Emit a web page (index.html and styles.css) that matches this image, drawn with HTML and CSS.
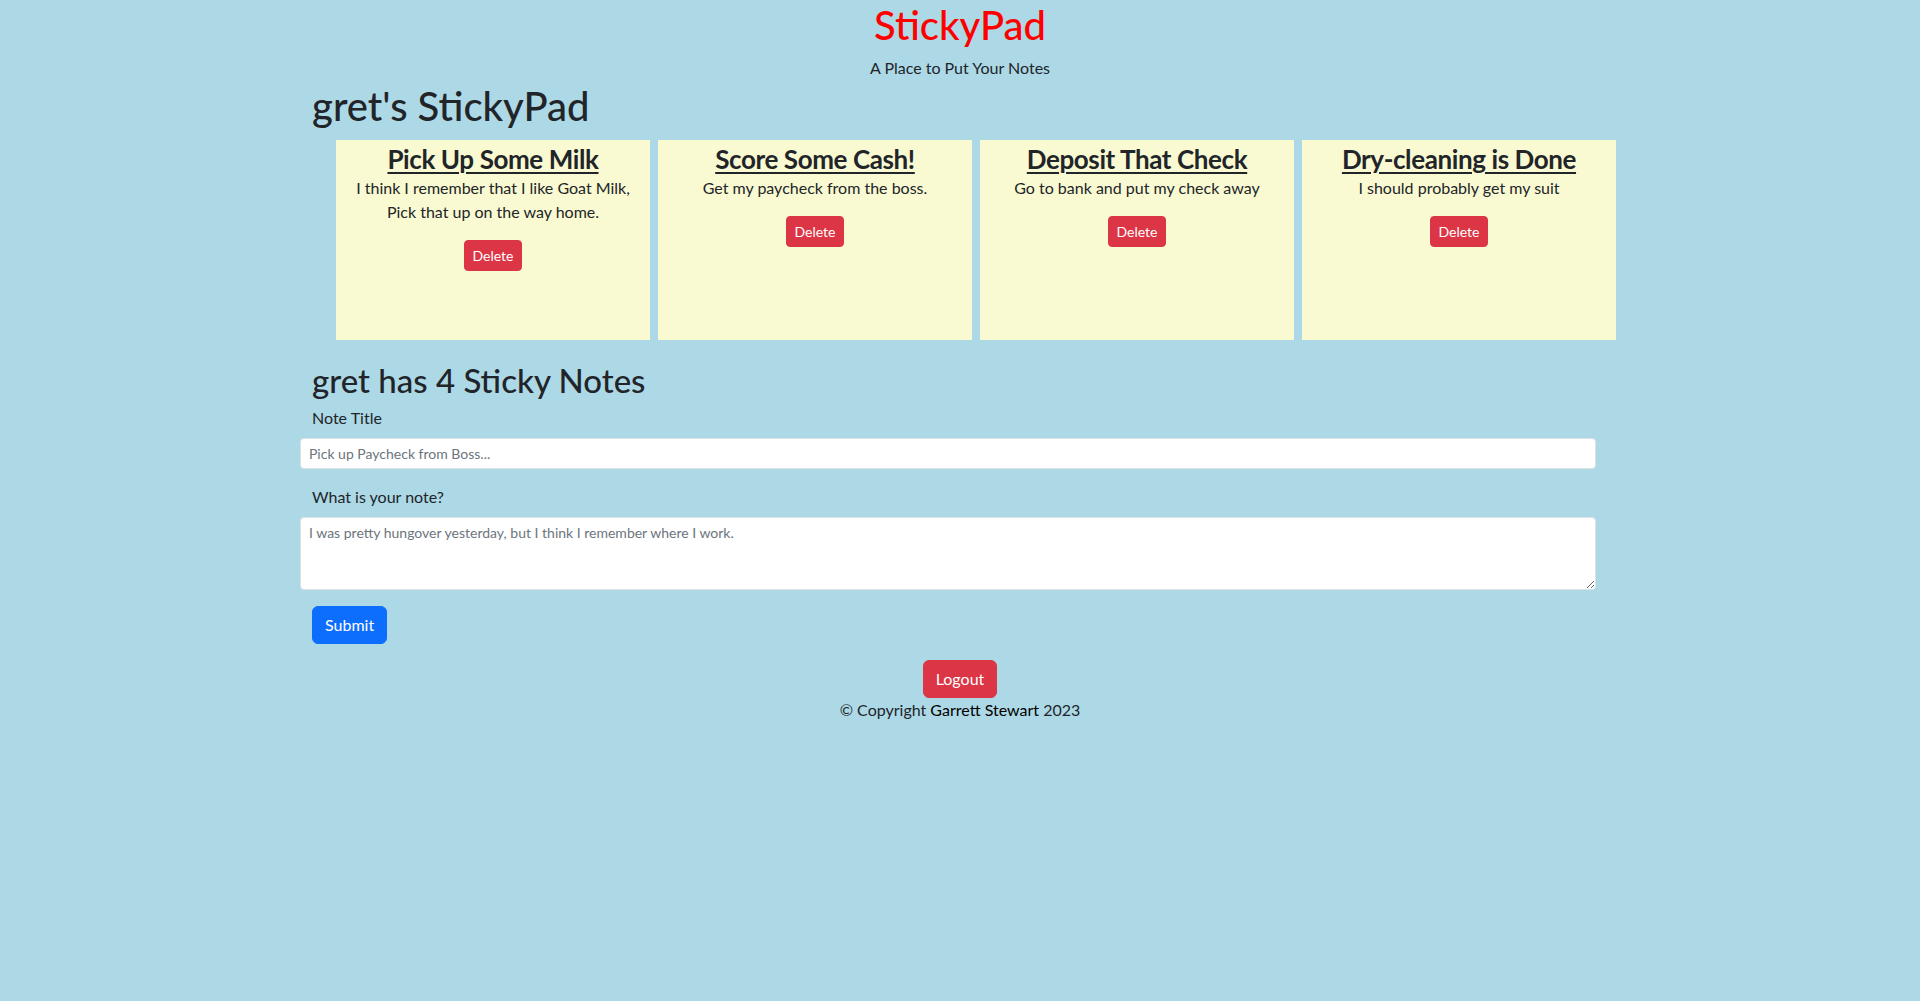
FILE: index.html
```html
<!DOCTYPE html>
<html lang="en">
<head>
<meta charset="utf-8">
<title>StickyPad</title>
<link rel="stylesheet" href="styles.css">
</head>
<body>
<header class="site-header">
  <h1 class="site-title">StickyPad</h1>
  <p class="site-tagline">A Place to Put Your Notes</p>
</header>
<main class="container">
  <h1 class="pad-title">gret's StickyPad</h1>
  <div class="notes">
    <div class="note">
      <h3 class="note-title">Pick Up Some Milk</h3>
      <p class="note-text">I think I remember that I like Goat Milk, Pick that up on the way home.</p>
      <button class="btn btn-sm btn-danger">Delete</button>
    </div>
    <div class="note">
      <h3 class="note-title">Score Some Cash!</h3>
      <p class="note-text">Get my paycheck from the boss.</p>
      <button class="btn btn-sm btn-danger">Delete</button>
    </div>
    <div class="note">
      <h3 class="note-title">Deposit That Check</h3>
      <p class="note-text">Go to bank and put my check away</p>
      <button class="btn btn-sm btn-danger">Delete</button>
    </div>
    <div class="note">
      <h3 class="note-title">Dry-cleaning is Done</h3>
      <p class="note-text">I should probably get my suit</p>
      <button class="btn btn-sm btn-danger">Delete</button>
    </div>
  </div>
  <h2 class="count-title">gret has 4 Sticky Notes</h2>
  <form class="note-form">
    <label class="form-label" for="title">Note Title</label>
    <input class="form-control" id="title" type="text" placeholder="Pick up Paycheck from Boss...">
    <label class="form-label" for="body">What is your note?</label>
    <textarea class="form-control form-area" id="body" rows="3" placeholder="I was pretty hungover yesterday, but I think I remember where I work."></textarea>
    <div class="form-actions"><button type="button" class="btn btn-primary">Submit</button></div>
  </form>
</main>
<footer class="site-footer">
  <button class="btn btn-danger">Logout</button>
  <p class="copyright">© Copyright <span class="author">Garrett Stewart</span> 2023</p>
</footer>
</body>
</html>
```

FILE: styles.css
```css
* { box-sizing: border-box; }
body {
  margin: 0;
  background: #add8e6;
  color: #212529;
  font-family: Lato, "Liberation Sans", sans-serif;
  font-size: 16px;
  line-height: 1.5;
}
.site-header { text-align: center; }
.site-title {
  margin: 0;
  padding-top: 1px;
  color: #ff0000;
  font-size: 40px;
  font-weight: 500;
  line-height: 1.2;
}
.site-tagline { margin: 7px 0 2px; }
.container {
  width: 1320px;
  margin: 0 auto;
  padding: 0 12px;
}
.pad-title {
  margin: 0 0 10px;
  font-size: 40px;
  font-weight: 500;
  line-height: 1.2;
}
.notes {
  display: flex;
  gap: 8px;
  padding-left: 24px;
}
.note {
  flex: none;
  width: 314px;
  height: 200px;
  background: #fafad2;
  text-align: center;
}
.note-title {
  margin: 0;
  padding-top: 4px;
  font-size: 26px;
  font-weight: 700;
  line-height: 1.2;
  letter-spacing: -0.4px;
  text-decoration: underline;
  text-decoration-thickness: 2px;
  text-underline-offset: 3px;
}
.note-text { margin: 1px 8px 16px; }
.btn {
  display: inline-block;
  font-family: inherit;
  font-size: 16px;
  line-height: 1.5;
  padding: 6px 12px;
  border: 1px solid transparent;
  border-radius: 6px;
  color: #fff;
  cursor: pointer;
}
.btn-sm {
  font-size: 14px;
  padding: 4px 8px;
  border-radius: 4px;
}
.btn-danger { background: #dc3545; border-color: #dc3545; }
.btn-primary { background: #0d6efd; border-color: #0d6efd; }
.count-title {
  margin: 21px 0 5px;
  font-size: 33px;
  font-weight: 500;
  line-height: 1.2;
}
.note-form { display: flex; flex-direction: column; }
.form-label { display: block; margin-bottom: 8px; }
.form-control {
  display: block;
  width: 1296px;
  margin: 0 0 16px -12px;
  padding: 4px 8px;
  font-family: inherit;
  font-size: 14px;
  line-height: 1.5;
  color: #212529;
  background: #fff;
  border: 1px solid #dee2e6;
  border-radius: 4px;
}
.form-control::placeholder { color: #6c757d; }
.form-area { height: 73px; }
.form-actions { margin-bottom: 16px; }
.site-footer { text-align: center; }
.copyright { margin: 0; }
.author { color: #000; }
```
